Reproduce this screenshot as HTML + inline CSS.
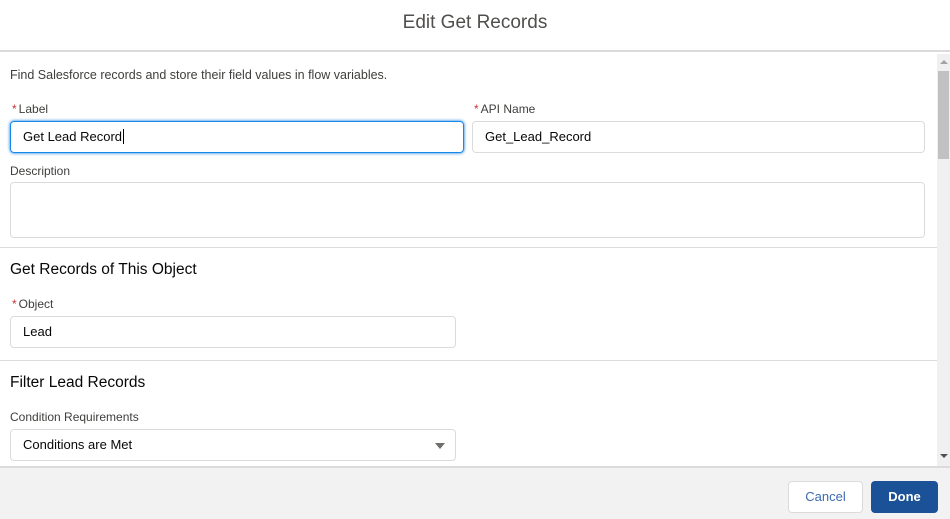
<!DOCTYPE html>
<html><head><style>
*{box-sizing:border-box;margin:0;padding:0}
body{width:950px;height:519px;overflow:hidden;background:#fff;font-family:"Liberation Sans",sans-serif;color:#080707;position:relative}
.hdr{position:absolute;left:0;top:0;width:950px;height:52px;text-align:center;line-height:46px;font-size:19px;color:#514f4d;border-bottom:2px solid #dddbda}
.body{position:absolute;left:0;top:54px;width:937px;height:412px;overflow:hidden}
.sb{position:absolute;left:937px;top:54px;width:13px;height:412px;background:#f0f0f0}
.thumb{position:absolute;left:1px;top:17px;width:11px;height:88px;background:#c1c1c1}
.t{position:absolute;font-size:12.5px}
.lbl{position:absolute;font-size:12px;color:#3e3e3c}
.lbl b{color:#c23934;font-weight:normal;margin-right:2px}
.inp{position:absolute;border:1px solid #dddbda;border-radius:4px;font-size:13px;padding-left:12px;color:#080707}
.sec{position:absolute;left:0;width:937px;border-top:1px solid #dddbda}
.h{position:absolute;font-size:15.5px;color:#080707}
.ftr{position:absolute;left:0;top:466px;width:950px;height:53px;background:#f3f2f2;border-top:2px solid #dddbda}
.btn{position:absolute;border-radius:4px;font-size:13px;text-align:center}
</style></head><body>
<div class="hdr">Edit Get Records</div>
<div class="body">
<div class="t" style="left:10px;top:14px;color:#3e3e3c">Find Salesforce records and store their field values in flow variables.</div>
<div class="lbl" style="left:12px;top:48px"><b>*</b>Label</div>
<div class="inp" style="left:10px;top:67px;width:454px;height:32px;line-height:30px;border-color:#1589ee;box-shadow:0 0 3px #0070d2">Get Lead Record<span style="border-left:1px solid #000;margin-left:1px"></span></div>
<div class="lbl" style="left:474px;top:48px"><b>*</b>API Name</div>
<div class="inp" style="left:472px;top:67px;width:453px;height:32px;line-height:30px">Get_Lead_Record</div>
<div class="lbl" style="left:10px;top:110px">Description</div>
<div class="inp" style="left:10px;top:128px;width:915px;height:56px"></div>
<div class="sec" style="top:193px"></div>
<div class="h" style="left:10px;top:207px">Get Records of This Object</div>
<div class="lbl" style="left:12px;top:243px"><b>*</b>Object</div>
<div class="inp" style="left:10px;top:262px;width:446px;height:32px;line-height:30px">Lead</div>
<div class="sec" style="top:306px"></div>
<div class="h" style="left:10px;top:320px">Filter Lead Records</div>
<div class="lbl" style="left:10px;top:356px">Condition Requirements</div>
<div class="inp" style="left:10px;top:375px;width:446px;height:32px;line-height:30px">Conditions are Met<span style="position:absolute;right:10px;top:13px;border-left:5px solid transparent;border-right:5px solid transparent;border-top:6px solid #706e6b"></span></div>
</div>
<div class="sb"><div style="position:absolute;left:3px;top:6px;border-left:4px solid transparent;border-right:4px solid transparent;border-bottom:4px solid #a3a3a3"></div><div class="thumb"></div><div style="position:absolute;left:3px;top:400px;border-left:4px solid transparent;border-right:4px solid transparent;border-top:4px solid #505050"></div></div>
<div class="ftr">
<div class="btn" style="left:788px;top:13px;width:75px;height:32px;line-height:30px;background:#fff;border:1px solid #dddbda;color:#3b6bb0">Cancel</div>
<div class="btn" style="left:871px;top:13px;width:67px;height:32px;line-height:32px;background:#1b5297;color:#fff;font-weight:bold">Done</div>
</div>
</body></html>
